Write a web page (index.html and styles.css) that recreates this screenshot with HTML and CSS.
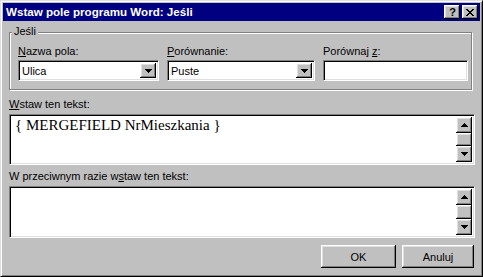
FILE: index.html
```html
<!DOCTYPE html>
<html lang="pl">
<head>
    <meta charset="UTF-8">
    <title>Wstaw pole programu Word: Jeśli</title>
    <link rel="stylesheet" href="styles.css">
</head>
<body>

    <div class="window">
        <!-- Title bar -->
        <div class="titlebar">
            <span class="title">Wstaw pole programu Word: Jeśli</span>
            <div class="title-btn raised help">?</div>
            <div class="title-btn raised close">
                <svg width="8" height="7" shape-rendering="crispEdges"><path d="M0 0h2v1H0zM6 0h2v1H6zM1 1h2v1H1zM5 1h2v1H5zM2 2h4v1H2zM3 3h2v1H3zM2 4h4v1H2zM1 5h2v1H1zM5 5h2v1H5zM0 6h2v1H0zM6 6h2v1H6z"/></svg>
            </div>
        </div>

        <div class="content">
            <fieldset class="group">
                <legend>Jeśli</legend>
                <div class="fields">
                    <div class="field field-name">
                        <label><u>N</u>azwa pola:</label>
                        <div class="combo sunken">
                            <span class="combo-text">Ulica</span>
                            <div class="drop raised">
                                <svg width="7" height="4" shape-rendering="crispEdges"><path d="M0 0h7v1H0zM1 1h5v1H1zM2 2h3v1H2zM3 3h1v1H3z"/></svg>
                            </div>
                        </div>
                    </div>
                    <div class="field field-cmp">
                        <label><u>P</u>orównanie:</label>
                        <div class="combo sunken">
                            <span class="combo-text">Puste</span>
                            <div class="drop raised">
                                <svg width="7" height="4" shape-rendering="crispEdges"><path d="M0 0h7v1H0zM1 1h5v1H1zM2 2h3v1H2zM3 3h1v1H3z"/></svg>
                            </div>
                        </div>
                    </div>
                    <div class="field field-val">
                        <label>Porównaj <u>z</u>:</label>
                        <div class="combo sunken"></div>
                    </div>
                </div>
            </fieldset>

            <label class="box-label"><u>W</u>staw ten tekst:</label>
            <div class="textbox sunken box-then">
                <div class="textbox-text">{ MERGEFIELD NrMieszkania }</div>
                <div class="scrollbar">
                    <div class="sb-btn raised">
                        <svg width="7" height="4" shape-rendering="crispEdges"><path d="M3 0h1v1H3zM2 1h3v1H2zM1 2h5v1H1zM0 3h7v1H0z"/></svg>
                    </div>
                    <div class="sb-thumb raised"></div>
                    <div class="sb-btn raised">
                        <svg width="7" height="4" shape-rendering="crispEdges"><path d="M0 0h7v1H0zM1 1h5v1H1zM2 2h3v1H2zM3 3h1v1H3z"/></svg>
                    </div>
                </div>
            </div>

            <label class="box-label second">W przeciwnym razie w<u>s</u>taw ten tekst:</label>
            <div class="textbox sunken box-else">
                <div class="textbox-text"></div>
                <div class="scrollbar">
                    <div class="sb-btn raised">
                        <svg width="7" height="4" shape-rendering="crispEdges"><path d="M3 0h1v1H3zM2 1h3v1H2zM1 2h5v1H1zM0 3h7v1H0z"/></svg>
                    </div>
                    <div class="sb-thumb raised"></div>
                    <div class="sb-btn raised">
                        <svg width="7" height="4" shape-rendering="crispEdges"><path d="M0 0h7v1H0zM1 1h5v1H1zM2 2h3v1H2zM3 3h1v1H3z"/></svg>
                    </div>
                </div>
            </div>

            <div class="buttons">
                <button class="btn raised btn-ok">OK</button>
                <button class="btn raised btn-cancel">Anuluj</button>
            </div>
        </div>
    </div>

</body>
</html>
```

FILE: styles.css
```css
body {
    margin: 0;
    background-color: #c0c0c0;
    font-family: "Liberation Sans", Arial, sans-serif;
    font-size: 11px;
    color: #000;
}
/* Window frame */
.window {
    box-sizing: border-box;
    width: 483px;
    height: 277px;
    padding: 2px;
    background-color: #c0c0c0;
    border: 1px solid;
    border-color: #dfdfdf #000 #000 #dfdfdf;
    box-shadow: inset 1px 1px 0 #fff, inset -1px -1px 0 #808080;
    display: flex;
    flex-direction: column;
}
/* 3D helpers */
.raised {
    background-color: #c0c0c0;
    box-shadow: inset -1px -1px 0 #000, inset 1px 1px 0 #fff,
                inset -2px -2px 0 #808080, inset 2px 2px 0 #dfdfdf;
}
.sunken {
    box-sizing: border-box;
    background-color: #fff;
    border: 1px solid;
    border-color: #808080 #fff #fff #808080;
    box-shadow: inset 1px 1px 0 #000, inset -1px -1px 0 #dfdfdf;
}
/* Title bar */
.titlebar {
    height: 18px;
    background-color: #000080;
    display: flex;
    align-items: flex-start;
    padding: 0 2px 0 3px;
}
.title {
    flex: 1;
    color: #fff;
    font-weight: bold;
    font-size: 11.6px;
    line-height: 18px;
    white-space: nowrap;
}
.title-btn {
    width: 16px;
    height: 14px;
    margin-top: 2px;
    display: flex;
    align-items: center;
    justify-content: center;
}
.help {
    font-weight: bold;
    font-size: 11px;
    line-height: 14px;
    padding-left: 1px;
    box-sizing: border-box;
}
.close {
    margin-left: 2px;
}
.close svg {
    margin-top: 1px;
}
/* Content */
.content {
    flex: 1;
    display: flex;
    flex-direction: column;
    padding: 0 5px 0 6px;
}
label {
    display: block;
    line-height: 13px;
    white-space: nowrap;
}
/* Group box */
.group {
    box-sizing: border-box;
    width: 463px;
    min-width: 0;
    margin: 4px 0 8px 0;
    padding: 5px 3px 8px 8px;
    border: 1px solid #808080;
    box-shadow: 1px 1px 0 #fff, inset 1px 1px 0 #fff;
}
.group legend {
    padding: 0 2px 2px 2px;
    margin-left: -6px;
    line-height: 13px;
    background-color: #c0c0c0;
}
.fields {
    display: grid;
    grid-template-columns: 141px 148px 145px;
    column-gap: 8px;
}
.field label {
    margin-bottom: 2px;
}
.combo {
    height: 21px;
    display: flex;
    align-items: stretch;
    padding: 2px;
}
.combo-text {
    flex: 1;
    padding-left: 1px;
    line-height: 17px;
}
.drop {
    width: 16px;
    display: flex;
    align-items: center;
    justify-content: center;
}
/* Text boxes with scrollbars */
.box-label {
    margin-bottom: 3px;
}
.box-label.second {
    margin-top: 5px;
}
.textbox {
    display: flex;
    padding: 2px;
}
.box-then {
    height: 51px;
}
.box-else {
    height: 52px;
}
.textbox-text {
    flex: 1;
    padding: 0 3px;
    font-family: "Liberation Serif", "Times New Roman", serif;
    font-size: 15px;
    white-space: nowrap;
}
.scrollbar {
    width: 16px;
    display: flex;
    flex-direction: column;
}
.sb-btn {
    height: 16px;
    display: flex;
    align-items: center;
    justify-content: center;
}
.sb-thumb {
    flex: 1;
}
/* Dialog buttons */
.buttons {
    display: flex;
    justify-content: flex-end;
    gap: 6px;
    margin-top: 7px;
    padding-right: 1px;
}
.btn {
    height: 23px;
    border: none;
    padding: 1px 0 0 0;
    font-family: "Liberation Sans", Arial, sans-serif;
    font-size: 11px;
    color: #000;
}
.btn-ok {
    width: 75px;
}
.btn-cancel {
    width: 72px;
}
```
